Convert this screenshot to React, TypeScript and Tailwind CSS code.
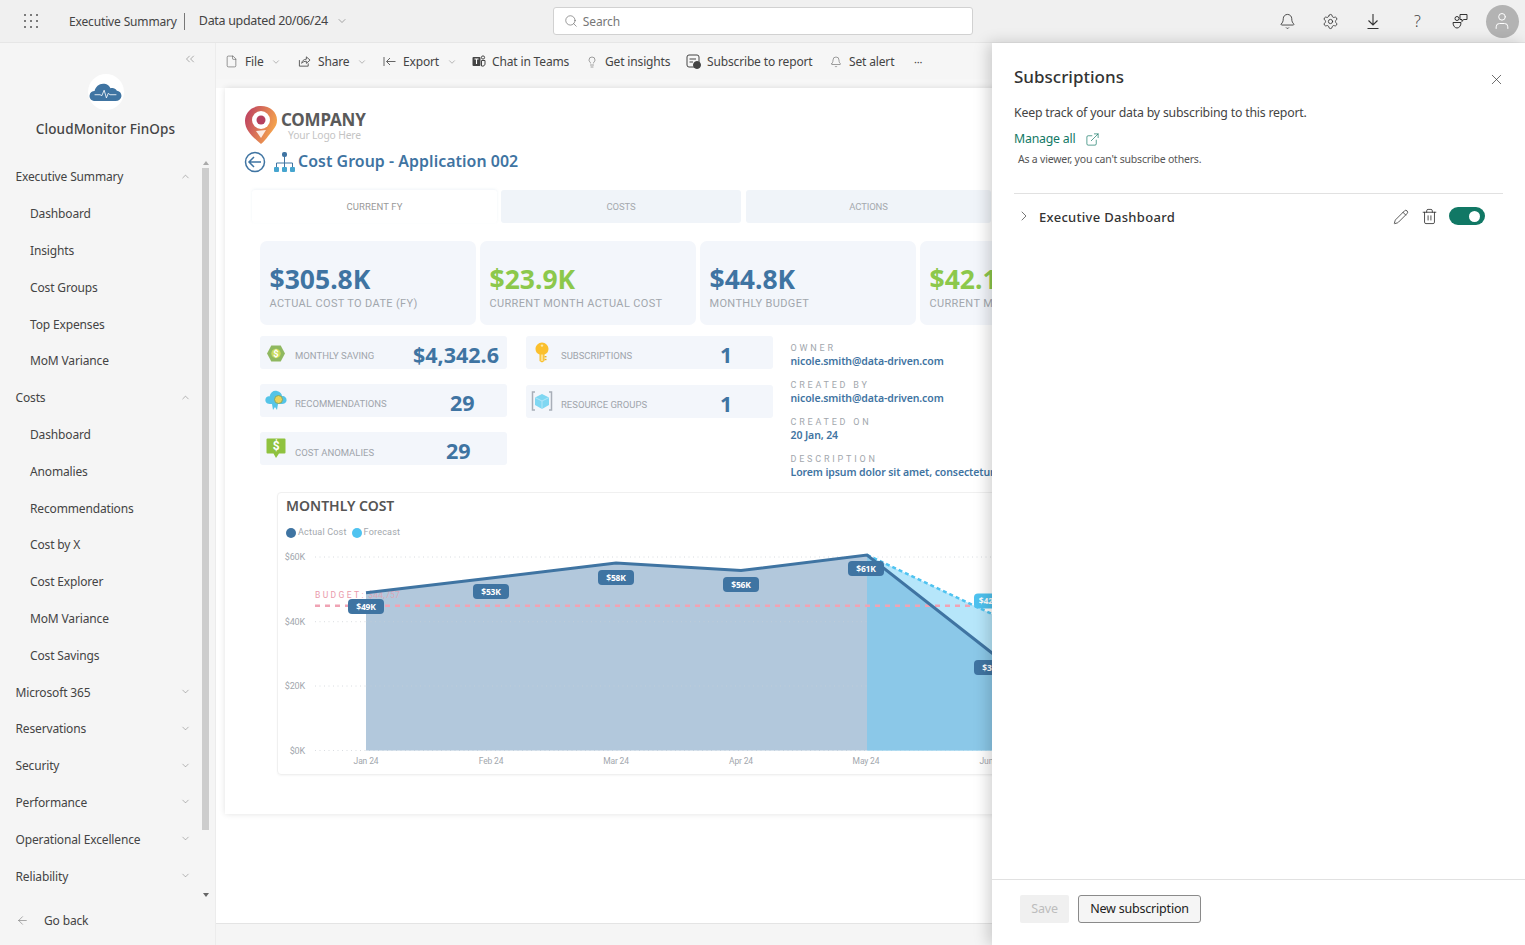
import React from "react";
import { Bell, Settings, Search, ChevronDown, ChevronUp, ChevronRight, ChevronsLeft, File, Lightbulb, X, Pencil, Trash2, ArrowLeft, ExternalLink, User } from "lucide-react";

const ui = "font-['Noto_Sans',sans-serif]";
const din = "font-['Roboto',sans-serif]";

type NavRow = { label: string; child?: boolean; chev?: "up" | "down" };
const nav: NavRow[] = [
  { label: "Executive Summary", chev: "up" },
  { label: "Dashboard", child: true },
  { label: "Insights", child: true },
  { label: "Cost Groups", child: true },
  { label: "Top Expenses", child: true },
  { label: "MoM Variance", child: true },
  { label: "Costs", chev: "up" },
  { label: "Dashboard", child: true },
  { label: "Anomalies", child: true },
  { label: "Recommendations", child: true },
  { label: "Cost by X", child: true },
  { label: "Cost Explorer", child: true },
  { label: "MoM Variance", child: true },
  { label: "Cost Savings", child: true },
  { label: "Microsoft 365", chev: "down" },
  { label: "Reservations", chev: "down" },
  { label: "Security", chev: "down" },
  { label: "Performance", chev: "down" },
  { label: "Operational Excellence", chev: "down" },
  { label: "Reliability", chev: "down" },
];

function AppsIcon() {
  const pts = [0, 6, 12];
  return (
    <svg width="14" height="14" viewBox="-1 -1 14 14" fill="#555">
      {pts.map((y) => pts.map((x) => <circle key={`${x}-${y}`} cx={x} cy={y} r="1" />))}
    </svg>
  );
}

function CloudLogo() {
  return (
    <div className="flex h-[36px] w-[36px] items-center justify-center rounded-full bg-white">
      <svg width="35" height="20" viewBox="0 0 36 22">
        <path d="M7 21 C2 21 0 17.5 0.5 14.5 C1 11.5 3.5 10 6 10 C7 4.5 12 1 17 2 C20 2.5 22.5 4.5 23.5 7 C25.5 6 29 6.5 30.5 9.5 C34 10 36 13 35.5 16 C35 19 32.5 21 29 21 Z" fill="#3f74a2" />
        <path d="M6 14 H12 L14 15 L16.5 9 L19 17.5 L21 12.5 L23 14 H30" fill="none" stroke="#fff" strokeWidth="0.9" />
      </svg>
    </div>
  );
}

function CompanyPin() {
  return (
    <svg width="34" height="40" viewBox="0 0 34 40">
      <defs>
        <linearGradient id="pin" x1="0" y1="0" x2="1" y2="0.4">
          <stop offset="0" stopColor="#b93a63" />
          <stop offset="1" stopColor="#f4a24d" />
        </linearGradient>
      </defs>
      <path d="M17 1 C7 1 1 8 1 16 C1 26 10 33 17 39 C20 37 25 30 29 25 C32 21 33 19 33 15 C33 7 26 1 17 1 Z" fill="url(#pin)" />
      <circle cx="17" cy="15" r="9" fill="#fff" />
      <path d="M12 26 L17 33 L22 25 Z" fill="#fff" opacity="0.85" />
      <circle cx="17" cy="15" r="4.5" fill="#b5405f" />
    </svg>
  );
}

function Hierarchy() {
  return (
    <svg width="21" height="20" viewBox="0 0 21 20" fill="#46a5cf">
      <rect x="8" y="0" width="5" height="5" rx="2" fill="#3f74a2" />
      <path d="M10.5 5 V11 M2.5 15 V11 H18.5 V15 M10.5 11 V15" stroke="#3f74a2" strokeWidth="1" fill="none" />
      <rect x="0" y="15" width="5" height="5" rx="1" />
      <rect x="8" y="15" width="5" height="5" rx="1" />
      <rect x="16" y="15" width="5" height="5" rx="1" />
    </svg>
  );
}

function HexDollar() {
  return (
    <svg width="20" height="17" viewBox="0 0 20 18">
      <path d="M5 0.5 H15 L19.5 9 L15 17.5 H5 L0.5 9 Z" fill="#8fb860" />
      <circle cx="10" cy="9" r="5" fill="#c9dc5c" />
      <text x="10" y="12.5" fontSize="10" textAnchor="middle" fill="#fff" fontWeight="700" fontFamily="Roboto">$</text>
    </svg>
  );
}

function KeyIcon() {
  return (
    <svg width="14" height="21" viewBox="0 0 14 21">
      <path d="M7 0.5 C10.5 0.5 13.5 3.5 13.5 7 C13.5 10 11.5 12 9.5 12.5 V19 L7 20.5 L4.5 19 V12.5 C2.5 12 0.5 10 0.5 7 C0.5 3.5 3.5 0.5 7 0.5 Z" fill="#fbc02d" />
      <circle cx="7" cy="3.6" r="1.2" fill="#fde9a8" />
      <rect x="5.8" y="12.5" width="2.4" height="6.5" fill="#fde08a" />
      <rect x="9.5" y="14" width="2" height="1.4" fill="#e9b325" />
      <rect x="9.5" y="16.8" width="2" height="1.4" fill="#e9b325" />
    </svg>
  );
}

function CloudBadge() {
  return (
    <svg width="22" height="21" viewBox="0 0 22 21">
      <path d="M5 14 C1 14 0 11 0.5 9 C1 7 3 6 4.5 6.5 C5.5 2 9 0 12 1 C15 1.5 17 4 17 6 C20 6 22 8 21.5 11 C21 13 19 14 17 14 Z" fill="#54c4e8" />
      <circle cx="13.5" cy="9.5" r="4" fill="#e9d35a" stroke="#7fa86a" strokeWidth="1" />
      <path d="M7 14 L8 20 L10 17 L12 20 L13 14 Z" fill="#54c4e8" />
    </svg>
  );
}

function CubeIcon() {
  return (
    <svg width="22" height="20" viewBox="0 0 22 20">
      <path d="M4 1 H1.5 V19 H4 M18 1 H20.5 V19 H18" stroke="#a8aeb8" strokeWidth="1.5" fill="none" />
      <path d="M11 3 L18 6.5 V14 L11 18 L4 14 V6.5 Z" fill="#7fd7f2" />
      <path d="M4 6.5 L11 10 L18 6.5 M11 10 V18" stroke="#bfeafa" strokeWidth="0.8" fill="none" />
    </svg>
  );
}

function SpeechDollar() {
  return (
    <svg width="20" height="21" viewBox="0 0 20 21">
      <path d="M1.5 0.5 H18.5 Q19.5 0.5 19.5 1.5 V14.5 Q19.5 15.5 18.5 15.5 H13 L10 20 L7.5 15.5 H1.5 Q0.5 15.5 0.5 14.5 V1.5 Q0.5 0.5 1.5 0.5 Z" fill="#8fc23f" />
      <text x="10" y="12" fontSize="12" textAnchor="middle" fill="#fff" fontWeight="700" fontFamily="Roboto">$</text>
    </svg>
  );
}

function Kpi({ value, label, green }: { value: string; label: string; green?: boolean }) {
  return (
    <div className="flex h-[84px] w-[216px] shrink-0 flex-col rounded-[7px] bg-[#f3f6fb] pl-[9.5px] pt-[21px]">
      <div className={`${ui} text-[26.5px] font-bold leading-[34px] tracking-[0px] ${green ? "text-[#8cc84b]" : "text-[#3f74a2]"}`}>{value}</div>
      <div className={`${din} mt-[1px] whitespace-nowrap text-[11px] leading-[14px] tracking-[0.35px] text-[#a2a7ad]`}>{label}</div>
    </div>
  );
}

function Mini({ icon, label, value, valueClass, iconClass }: { icon: React.ReactNode; label: string; value: string; valueClass: string; iconClass?: string }) {
  return (
    <div className="relative flex h-[33px] w-[247px] items-center rounded-[3px] bg-[#f3f6fb]">
      <div className={`flex w-[32px] shrink-0 justify-center ${iconClass ?? ""}`}>{icon}</div>
      <div className={`${din} ml-[3px] mt-[8px] whitespace-nowrap text-[9.5px] tracking-[0px] text-[#a0a5ab]`}>{label}</div>
      <div className={`${ui} absolute top-[8px] text-[21.5px] font-bold leading-none tracking-[0px] text-[#3f74a2] ${valueClass}`}>{value}</div>
    </div>
  );
}

function Meta({ label, value }: { label: string; value: string }) {
  return (
    <div className="flex h-[37px] shrink-0 flex-col">
      <div className={`${din} text-[9px] leading-[12px] tracking-[2.8px] text-[#a2a7ad]`}>{label}</div>
      <div className={`${ui} whitespace-nowrap text-[10.5px] font-semibold leading-[14px] tracking-[-0.1px] text-[#3f74a2]`}>{value}</div>
    </div>
  );
}

function Tool({ icon, label, chevron, w }: { icon: React.ReactNode; label: string; chevron?: boolean; w: string }) {
  return (
    <div className={`flex shrink-0 items-center ${w}`}>
      <div className="flex w-[15px] shrink-0 justify-center">{icon}</div>
      <span className="ml-[6px] whitespace-nowrap">{label}</span>
      {chevron && <ChevronDown size={10} strokeWidth={1.2} className="ml-[7.5px] text-[#777]" />}
    </div>
  );
}

function Chart() {
  const pills: [number, number, string, string][] = [
    [366, 606.5, "$49K", "#3f74a2"],
    [491, 591.5, "$53K", "#3f74a2"],
    [616, 577.5, "$58K", "#3f74a2"],
    [741, 584.5, "$56K", "#3f74a2"],
    [866, 568.5, "$61K", "#3f74a2"],
    [992, 601, "$42.1K", "#4fc3f0"],
    [992, 667.5, "$31K", "#3f74a2"],
  ];
  return (
    <svg width="800" height="240" viewBox="278 540 800 240" className="block">
      <g stroke="#cfd3d8" strokeWidth="0.8" strokeDasharray="1 3.5">
        <line x1="315" x2="1077" y1="557" y2="557" />
        <line x1="315" x2="1077" y1="621.7" y2="621.7" />
        <line x1="315" x2="1077" y1="686" y2="686" />
        <line x1="315" x2="1077" y1="750.5" y2="750.5" />
      </g>
      <g fontFamily="Roboto" fontSize="9" fill="#a2a7ad" textAnchor="end">
        <text x="305" y="560">$60K</text>
        <text x="305" y="625">$40K</text>
        <text x="305" y="689">$20K</text>
        <text x="305" y="754">$0K</text>
      </g>
      <path d="M366 592.7 L491 578 L616 563 L741 570.5 L867 555 V750.5 H366 Z" fill="#b2c8dc" />
      <path d="M867 555 L992 614 L1060 645 V750.5 H867 Z" fill="#b6e6fa" />
      <path d="M867 555 L992 653 L1060 706 V750.5 H867 Z" fill="#8bc8e8" />
      <g stroke="#cfd3d8" strokeWidth="0.8" strokeDasharray="1 3.5" opacity="0.6">
        <line x1="366" x2="867" y1="621.7" y2="621.7" />
        <line x1="366" x2="867" y1="686" y2="686" />
      </g>
      <line x1="315" x2="1077" y1="605.7" y2="605.7" stroke="#f0a3b4" strokeWidth="2.5" strokeDasharray="5 5" />
      <text x="315" y="598" fontFamily="Roboto" fontSize="8.5" fill="#ea9aab">
        <tspan letterSpacing="2.4">BUDGET:</tspan>
        <tspan letterSpacing="0.2" opacity="0.7"> $44,757</tspan>
      </text>
      <path d="M867 555 L992 614 L1060 645" fill="none" stroke="#4fc3f0" strokeWidth="2.5" strokeDasharray="4 3" />
      <path d="M366 592.7 L491 578 L616 563 L741 570.5 L867 555 L992 653 L1060 706" fill="none" stroke="#3f74a2" strokeWidth="3" />
      {pills.map(([x, y, t, c]) => (
        <g key={t}>
          <rect x={x - 18} y={y - 7.5} width="36" height="15" rx="4" fill={c} />
          <text x={x} y={y + 3} textAnchor="middle" fontFamily="Noto Sans" fontWeight="700" fontSize="8.5" fill="#fff">{t}</text>
        </g>
      ))}
      <g fontFamily="Roboto" fontSize="8.5" fill="#a2a7ad" textAnchor="middle">
        <text x="366" y="764">Jan 24</text>
        <text x="491" y="764">Feb 24</text>
        <text x="616" y="764">Mar 24</text>
        <text x="741" y="764">Apr 24</text>
        <text x="866" y="764">May 24</text>
        <text x="992" y="764">Jun 24</text>
      </g>
    </svg>
  );
}

export default function App() {
  return (
    <div className={`${ui} relative flex h-[945px] w-[1525px] flex-col overflow-hidden bg-white text-[12px] tracking-[-0.15px] text-[#444]`}>
      {/* Top bar */}
      <header className="flex h-[43px] shrink-0 items-center border-b border-[#e6e6e6] bg-[#f0f0f0]">
        <div className="ml-[24px] w-[45px] shrink-0"><AppsIcon /></div>
        <span className="whitespace-nowrap pt-[1px]">Executive Summary</span>
        <div className="ml-[7px] h-[17px] w-px bg-[#777]" />
        <span className="ml-[14px] w-[133px] whitespace-nowrap pt-[1px] text-[12.5px] tracking-[-0.32px]">Data updated 20/06/24</span>
        <ChevronDown size={12} strokeWidth={1} className="ml-[4px] text-[#555]" />
        <div className="ml-[205px] flex h-[28px] w-[420px] shrink-0 items-center rounded-[3px] border border-[#d1d1d1] bg-white pl-[10px] text-[#777]">
          <Search size={14} strokeWidth={1} className="text-[#555]" />
          <span className="ml-[5px] pt-[2px]">Search</span>
        </div>
        <div className="ml-[306px] flex w-[17px] justify-center"><Bell size={17} strokeWidth={1.2} className="text-[#333]" /></div>
        <div className="ml-[26px] flex w-[17px] justify-center"><Settings size={17} strokeWidth={1.2} className="text-[#333]" /></div>
        <div className="ml-[26px] flex w-[17px] justify-center">
          <svg width="16" height="17" viewBox="0 0 16 17" fill="none" stroke="#333" strokeWidth="1.1">
            <path d="M8 1 V12 M3.5 7.5 L8 12 L12.5 7.5 M2.5 15.5 H13.5" />
          </svg>
        </div>
        <div className="ml-[27px] flex w-[17px] justify-center text-[16px] font-light leading-none text-[#444]">?</div>
        <div className="ml-[26px] flex w-[17px] justify-center">
          <svg width="16" height="16" viewBox="0 0 16 16" fill="none" stroke="#333" strokeWidth="1">
            <path d="M8 1.5 H15 V6.5 H11.5 L10 8.5 V6.5 H8 Z" />
            <circle cx="5" cy="5.5" r="2" />
            <path d="M1 9.5 H9 C9 13 7 15 5 15 C3 15 1 13 1 9.5 Z" />
          </svg>
        </div>
        <div className="ml-[17px] flex h-[33px] w-[33px] items-center justify-center rounded-full bg-[#b3b3b3]">
          <User size={20} strokeWidth={1.2} className="text-white" />
        </div>
      </header>

      <div className="flex min-h-0 flex-1">
        {/* Sidebar */}
        <aside className="relative flex w-[216px] shrink-0 flex-col border-r border-[#ececec] bg-[#f5f5f5]">
          <div className="flex h-[31px] justify-end pr-[18px] pt-[9px] text-[#777]">
            <ChevronsLeft size={14} strokeWidth={1} />
          </div>
          <div className="flex h-[85px] flex-col items-center pr-[4px]">
            <CloudLogo />
            <div className="mt-[9px] text-[13.5px] font-medium tracking-[0.1px] text-[#444]">CloudMonitor FinOps</div>
          </div>
          <nav className="flex flex-col">
            {nav.map((n, i) => (
              <div key={i} className={`flex h-[36.8px] items-center pr-[24px] ${n.child ? "pl-[30px]" : "pl-[15.5px]"}`}>
                <span className="flex-1 whitespace-nowrap">{n.label}</span>
                {n.chev === "up" && <ChevronUp size={11} strokeWidth={1} className="-mt-[2px] text-[#666]" />}
                {n.chev === "down" && <ChevronDown size={11} strokeWidth={1} className="-mt-[2px] text-[#666]" />}
              </div>
            ))}
          </nav>
          <div className="mt-[17px] flex items-center pl-[16px]">
            <ArrowLeft size={13} strokeWidth={1} className="text-[#666]" />
            <span className="ml-[15px]">Go back</span>
          </div>
          <div className="absolute left-[202px] top-[125px] h-[662px] w-[7px] bg-[#cdcdcd]" />
          <div className="absolute left-[203px] top-[118px] h-0 w-0 border-x-[3px] border-b-[4px] border-x-transparent border-b-[#aaa]" />
          <div className="absolute left-[203px] top-[850px] h-0 w-0 border-x-[3px] border-t-[4px] border-x-transparent border-t-[#666]" />
        </aside>

        {/* Main */}
        <main className="flex min-w-0 flex-1 flex-col overflow-hidden">
          <div className="flex h-[36px] shrink-0 items-center bg-[#f6f6f6] pl-[8px] pt-[1px]">
            <Tool w="w-[73px]" icon={<File size={13} strokeWidth={1} />} label="File" chevron />
            <Tool w="w-[85px]" icon={
              <svg width="13" height="13" viewBox="0 0 14 14" fill="none" stroke="#555" strokeWidth="1">
                <path d="M1.5 5.5 V12 H11 V9" />
                <path d="M4 9 C4 6.5 6.5 4.5 9 4.5 V2 L13 5.5 L9 9 V6.7 C7 6.7 5 7.5 4 9 Z" />
              </svg>} label="Share" chevron />
            <Tool w="w-[89px]" icon={
              <svg width="13" height="11" viewBox="0 0 13 11" fill="none" stroke="#666" strokeWidth="1">
                <path d="M1 1 V10 M12.5 5.5 H3.5 M7 2 L3.5 5.5 L7 9" />
              </svg>} label="Export" chevron />
            <Tool w="w-[113px]" icon={
              <svg width="14" height="13" viewBox="0 0 14 13" fill="#444">
                <rect x="0.5" y="2" width="8" height="9" rx="1" />
                <path d="M2.5 4 H6.5 M4.5 4 V9" stroke="#fff" strokeWidth="1.1" />
                <circle cx="11" cy="2.5" r="1.6" fill="none" stroke="#444" />
                <path d="M9.5 5.5 H13 V9 C13 10.5 11.5 11.5 9.5 11 Z" fill="none" stroke="#444" />
              </svg>} label="Chat in Teams" />
            <Tool w="w-[102px]" icon={<Lightbulb size={12} strokeWidth={1} />} label="Get insights" />
            <Tool w="w-[142px]" icon={
              <svg width="15" height="15" viewBox="0 0 15 15" fill="none" stroke="#444" strokeWidth="1">
                <rect x="1" y="1" width="12" height="12" rx="2" />
                <path d="M3.5 5 H10 M3.5 8 H7" />
                <circle cx="11" cy="11" r="3.5" fill="#444" />
              </svg>} label="Subscribe to report" />
            <Tool w="w-[86px]" icon={<Bell size={12} strokeWidth={1} />} label="Set alert" />
            <span className="text-[11px] leading-none">···</span>
          </div>

          <div className="h-[9px] shrink-0 bg-[#f7f7f7]" />
          <div className="min-h-0 flex-1 bg-white pl-[9px]">
            <section className="flex h-[726px] w-[1100px] flex-col bg-white pl-[19px] shadow-[0_0_6px_rgba(0,0,0,0.12)]">
              <div className="mt-[17px] flex h-[39px] items-center">
                <CompanyPin />
                <div className="ml-[3px] mt-[3px] flex flex-col">
                  <span className="text-[17px] font-bold leading-[18px] tracking-[-0.2px] text-[#5a5a5a]">COMPANY</span>
                  <span className="ml-[7px] text-[10.3px] leading-[12px] text-[#c4c4c4]">Your Logo Here</span>
                </div>
              </div>
              <div className="mt-[4px] flex h-[28px] items-center">
                <svg width="22" height="22" viewBox="0 0 22 22" fill="none" stroke="#3f74a2" strokeWidth="1.5">
                  <circle cx="11" cy="11" r="9.5" />
                  <path d="M17 11 H5 M10 6 L5 11 L10 16" />
                </svg>
                <div className="ml-[8px]"><Hierarchy /></div>
                <span className="ml-[3px] whitespace-nowrap text-[15.9px] font-semibold tracking-[0.05px] text-[#3f74a2]">Cost Group - Application 002</span>
              </div>
              <div className="mt-[14px] flex h-[33px] pl-[8px]">
                <div className={`${din} flex w-[245px] items-center justify-center rounded-[3px] pt-[2px] text-[9.5px] tracking-[0.1px] text-[#999] shadow-[0_-1px_3px_rgba(63,116,162,0.08)]`}>CURRENT FY</div>
                <div className={`${din} ml-[4px] flex w-[240px] items-center justify-center rounded-[3px] bg-[#f0f4f9] pt-[2px] text-[9.5px] text-[#a5a9ae]`}>COSTS</div>
                <div className={`${din} ml-[5px] flex w-[245px] items-center justify-center rounded-[3px] bg-[#f0f4f9] pt-[2px] text-[9.5px] text-[#a5a9ae]`}>ACTIONS</div>
              </div>
              <div className="ml-[16px] mt-[18px] flex gap-[4px]">
                <Kpi value="$305.8K" label="ACTUAL COST TO DATE (FY)" />
                <Kpi value="$23.9K" label="CURRENT MONTH ACTUAL COST" green />
                <Kpi value="$44.8K" label="MONTHLY BUDGET" />
                <Kpi value="$42.1K" label="CURRENT MONTH FORECAST" green />
              </div>
              <div className="ml-[16px] mt-[11px] flex h-[129px]">
                <div className="flex w-[247px] flex-col gap-[15.5px]">
                  <Mini icon={<HexDollar />} label="MONTHLY SAVING" value="$4,342.6" valueClass="left-[153px]" iconClass="mt-[3px]" />
                  <Mini icon={<CloudBadge />} label="RECOMMENDATIONS" value="29" valueClass="left-[190px]" />
                  <Mini icon={<SpeechDollar />} label="COST ANOMALIES" value="29" valueClass="left-[186px]" />
                </div>
                <div className="ml-[19px] flex w-[247px] flex-col gap-[15.5px]">
                  <Mini icon={<KeyIcon />} label="SUBSCRIPTIONS" value="1" valueClass="left-[194px]" iconClass="-mt-[1px]" />
                  <Mini icon={<CubeIcon />} label="RESOURCE GROUPS" value="1" valueClass="left-[194px]" />
                </div>
                <div className="ml-[17.5px] flex flex-col pt-[6px]">
                  <Meta label="OWNER" value="nicole.smith@data-driven.com" />
                  <Meta label="CREATED BY" value="nicole.smith@data-driven.com" />
                  <Meta label="CREATED ON" value="20 Jan, 24" />
                  <Meta label="DESCRIPTION" value="Lorem ipsum dolor sit amet, consectetur adipiscing elit" />
                </div>
              </div>
              <div className="ml-[33px] mt-[27px] h-[283px] w-[800px] rounded-[4px] border border-[#f0f0f0] shadow-[0_1px_2px_rgba(0,0,0,0.04)]">
                <div className="ml-[8px] mt-[3px] text-[14px] font-semibold leading-[20px] tracking-[0px] text-[#555]">MONTHLY COST</div>
                <div className={`${din} ml-[8px] mt-[10px] flex h-[14px] items-center text-[9px] tracking-[0.2px] text-[#a2a7ad]`}>
                  <span className="h-[10px] w-[10px] rounded-full bg-[#3f74a2]" />
                  <span className="ml-[2px]">Actual Cost</span>
                  <span className="ml-[5px] h-[10px] w-[10px] rounded-full bg-[#4fc3f0]" />
                  <span className="ml-[2px]">Forecast</span>
                </div>
                <Chart />
              </div>
            </section>
          </div>
          <div className="h-[22px] shrink-0 border-t border-[#e4e4e4] bg-[#f5f5f5]" />
        </main>
      </div>

      {/* Subscriptions pane overlay */}
      <aside className="absolute bottom-0 left-[992px] top-[43px] flex w-[533px] flex-col bg-white pl-[22px] pr-[22px] text-[12.3px] tracking-[-0.2px] shadow-[-4px_0_14px_rgba(0,0,0,0.18)]">
        <div className="flex h-[60px] shrink-0 items-start pt-[20px]">
          <h2 className="flex-1 text-[17px] font-medium leading-[28px] tracking-[0px] text-[#333]">Subscriptions</h2>
          <X size={17} strokeWidth={1} className="-mr-[1.5px] mt-[7.5px] text-[#333]" />
        </div>
        <div className="h-[19px] shrink-0 leading-[19px]">Keep track of your data by subscribing to this report.</div>
        <div className="mt-[8px] flex h-[19px] shrink-0 items-center text-[#117865]">
          <span>Manage all</span>
          <ExternalLink size={15} strokeWidth={1.1} className="ml-[9px]" />
        </div>
        <div className="ml-[4px] mt-[2px] h-[16px] shrink-0 text-[10.5px] leading-[16px] text-[#555]">As a viewer, you can't subscribe others.</div>
        <div className="mt-[26px] flex h-[48px] shrink-0 items-center border-t border-[#e1e1e1] pl-[2px] pr-[18px]">
          <ChevronRight size={16} strokeWidth={1.1} className="-mt-[3px] text-[#444]" />
          <span className="ml-[7px] flex-1 text-[13px] font-medium tracking-[0.3px] text-[#333]">Executive Dashboard</span>
          <Pencil size={16} strokeWidth={1.2} className="-mt-[2px] text-[#333]" />
          <Trash2 size={17} strokeWidth={1.2} className="-mt-[2px] ml-[12px] text-[#333]" />
          <div className="-mt-[3px] ml-[11px] flex h-[18px] w-[36px] items-center justify-end rounded-full bg-[#117865] pr-[5px]">
            <span className="h-[11px] w-[11px] rounded-full bg-white" />
          </div>
        </div>
        <div className="flex-1" />
        <div className="-ml-[22px] -mr-[22px] flex h-[66px] shrink-0 items-start border-t border-[#e1e1e1] pl-[28px] pt-[15px] text-[12.5px]">
          <div className="flex h-[28px] w-[49px] items-center justify-center rounded-[2px] bg-[#f0f0f0] pt-[1px] text-[#bdbdbd]">Save</div>
          <div className="ml-[9px] flex h-[28px] w-[123px] items-center justify-center rounded-[3px] border border-[#8a8a8a] bg-[#f5f5f5] pt-[1px] text-[#222]">New subscription</div>
        </div>
      </aside>
    </div>
  );
}
